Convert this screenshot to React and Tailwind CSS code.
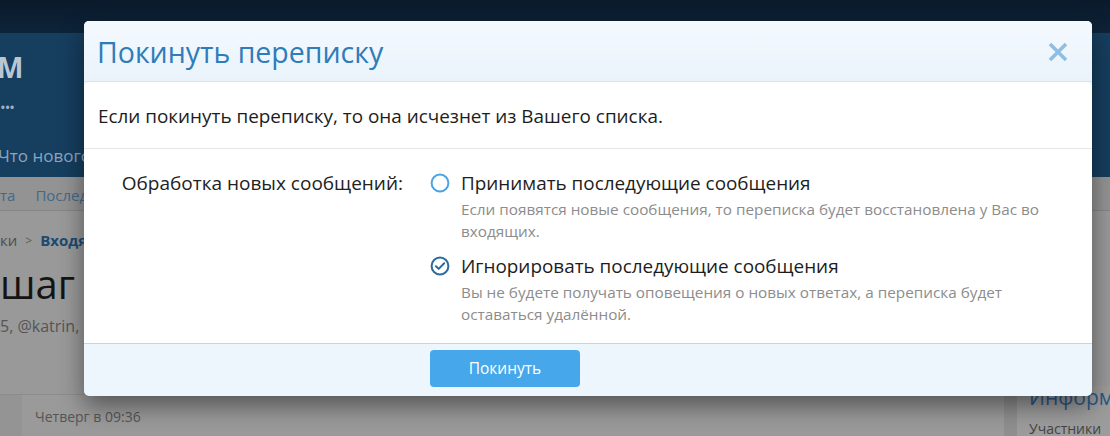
const font = { fontFamily: '"Open Sans", "Noto Sans", sans-serif' };

function RadioEmpty() {
  return (
    <svg width="20" height="20" viewBox="0 0 20 20" className="shrink-0">
      <circle cx="10" cy="10" r="8.4" fill="none" stroke="#4aa3e3" strokeWidth="2" />
    </svg>
  );
}

function RadioChecked() {
  return (
    <svg width="20" height="20" viewBox="0 0 20 20" className="shrink-0">
      <circle cx="10" cy="10" r="8.4" fill="none" stroke="#2a6aa0" strokeWidth="2" />
      <path d="M6 10.3l2.7 2.6L14.2 7.3" fill="none" stroke="#2a6aa0" strokeWidth="2" strokeLinecap="round" strokeLinejoin="round" />
    </svg>
  );
}

function CloseIcon() {
  return (
    <svg width="20" height="20" viewBox="0 0 20 20">
      <path d="M2 2L18 18M18 2L2 18" stroke="#8fbee2" strokeWidth="3.6" />
    </svg>
  );
}

function Background() {
  return (
    <div className="flex flex-col w-full h-full bg-[#999999]">
      {/* top bar */}
      <div className="h-[33px] bg-gradient-to-b from-[#0a1a2b] to-[#0e2439]" />
      {/* header */}
      <div className="h-[144px] bg-[#163e5f] flex flex-col">
        <div className="mt-[20px] -ml-[3px] text-[28px] font-bold leading-none text-[#b9c7d4]">M</div>
        <div className="mt-[19px] text-[15px] leading-none tracking-[-1px] text-[#9fb2c4]">•••</div>
        <div className="mt-[32px] -ml-[2px] text-[17px] leading-none text-[#8aa5bf] whitespace-nowrap">Что нового</div>
      </div>
      {/* nav row */}
      <div className="h-[34px] pt-[4px] bg-[#939393] border-b border-[#858585] flex items-center gap-5 text-[15px] text-[#45678a]">
        <span>та</span>
        <span>Последние</span>
      </div>
      {/* breadcrumb */}
      <div className="mt-[22px] flex items-center gap-[8px] text-[15px] leading-none">
        <span className="text-[#4f4f4f]">ки</span>
        <span className="text-[#5c5c5c] text-[12px]">&gt;</span>
        <span className="font-bold text-[#1c4a72]">Входящие</span>
      </div>
      <div className="mt-[16px] text-[40px] leading-none text-[#141414]">шаг</div>
      <div className="mt-[14px] text-[16px] leading-none text-[#555]">5, @katrin,</div>
      {/* message block */}
      <div className="mt-[60px] flex flex-1 min-h-0">
        <div className="w-[1004px] shrink-0 flex border-t border-[#8c8c8c] bg-[#9a9a9a]">
          <div className="w-[22px] bg-[#949494]" />
          <div className="pl-[13px] pt-[15px] text-[14px] leading-none text-[#555]">Четверг в 09:36</div>
        </div>
        <div className="w-[13px] shrink-0 bg-[#8f8f8f]" />
        <div className="flex-1 min-w-0 overflow-hidden bg-[#9c9c9c] flex flex-col pl-[12px] -mt-[8px] pt-[1px]">
          <div className="text-[21px] leading-none text-[#2c5a86] whitespace-nowrap">Информация</div>
          <div className="mt-[14px] text-[14px] leading-none text-[#444] whitespace-nowrap">Участники</div>
        </div>
      </div>
    </div>
  );
}

export default function App() {
  return (
    <div className="relative w-[1110px] h-[436px] overflow-hidden" style={font}>
      <Background />
      <div className="absolute inset-0 pl-[84px] pt-[21px]">
        <div className="w-[1008px] rounded-[5px] bg-[#edf5fd] shadow-[0_10px_25px_rgba(0,0,0,0.45)] overflow-hidden">
          {/* header */}
          <div className="h-[61px] flex items-center justify-between pl-[13px] pr-[24px] pt-[2px] bg-gradient-to-b from-[#f4f9fe] to-[#eaf3fb] border-b border-[#dde5ec]">
            <h2 className="text-[28.5px] leading-none text-[#2f7cba]">Покинуть переписку</h2>
            <CloseIcon />
          </div>
          {/* body */}
          <div className="bg-white rounded-t-[6px]">
            <div className="h-[67px] flex items-center pl-[14px] pt-[2px] border-b border-[#e6e6e6] text-[18.9px] text-[#1d1d1d]">
              Если покинуть переписку, то она исчезнет из Вашего списка.
            </div>
            <div className="flex pt-[21px] pb-[18px] border-b border-[#d2d2d2]">
              <div className="w-[345px] shrink-0 text-right pr-[26px] text-[19px] leading-[26px] text-[#222]">
                Обработка новых сообщений:
              </div>
              <div className="flex flex-col gap-[11px] pl-[1px]">
                <div className="flex gap-[11px]">
                  <div className="pt-[3px]"><RadioEmpty /></div>
                  <div>
                    <div className="text-[18.9px] leading-[26px] text-[#1d1d1d]">Принимать последующие сообщения</div>
                    <div className="text-[15.3px] leading-[22px] text-[#8c8c8c] mt-[2px]">
                      <div>Если появятся новые сообщения, то переписка будет восстановлена у Вас во</div>
                      <div>входящих.</div>
                    </div>
                  </div>
                </div>
                <div className="flex gap-[11px]">
                  <div className="pt-[3px]"><RadioChecked /></div>
                  <div>
                    <div className="text-[18.9px] leading-[26px] text-[#1d1d1d]">Игнорировать последующие сообщения</div>
                    <div className="text-[15.3px] leading-[22px] text-[#8c8c8c] mt-[2px]">
                      <div>Вы не будете получать оповещения о новых ответах, а переписка будет</div>
                      <div>оставаться удалённой.</div>
                    </div>
                  </div>
                </div>
              </div>
            </div>
          </div>
          {/* footer */}
          <div className="h-[52px] pt-[6px] pl-[346px]">
            <button className="w-[150px] h-[37px] rounded-[4px] bg-[#47a7eb] text-white text-[15.5px]">Покинуть</button>
          </div>
        </div>
      </div>
    </div>
  );
}
